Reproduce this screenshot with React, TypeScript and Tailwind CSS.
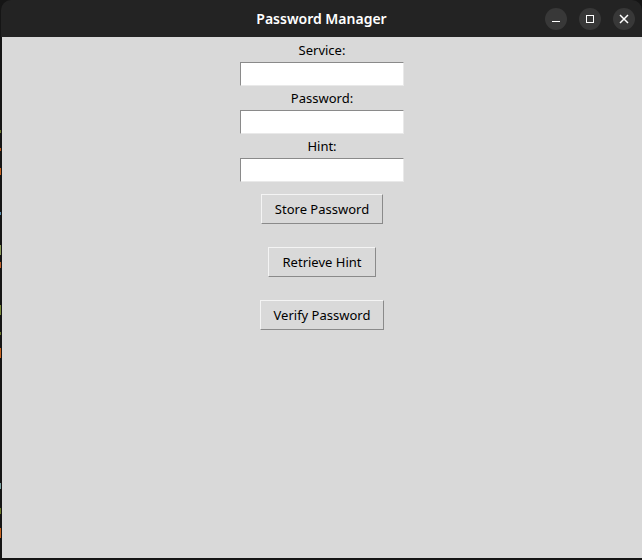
import React from "react";

const spots: { top: number; h: number; c: string }[] = [
  { top: 130, h: 3, c: "#6b7a2a" },
  { top: 148, h: 3, c: "#b85a1e" },
  { top: 168, h: 7, c: "#c8621f" },
  { top: 212, h: 3, c: "#5a8fb0" },
  { top: 245, h: 10, c: "#8a9a5a" },
  { top: 262, h: 6, c: "#c0602a" },
  { top: 305, h: 10, c: "#7a8a3a" },
  { top: 332, h: 3, c: "#6b7a2a" },
  { top: 348, h: 10, c: "#c8621f" },
  { top: 483, h: 6, c: "#7aa0a0" },
  { top: 508, h: 6, c: "#6b7a2a" },
  { top: 528, h: 10, c: "#c8621f" },
];

function Entry() {
  return (
    <div className="w-[164px] h-6 bg-white border-t border-l border-t-[#8a8a8a] border-l-[#8a8a8a] border-b border-r border-b-[#e9e9e9] border-r-[#e9e9e9]" />
  );
}

function Label({ text }: { text: string }) {
  return (
    <div className="h-6 flex items-center justify-center text-[13px] text-black leading-none">
      {text}
    </div>
  );
}

function Btn({ text, w, mt }: { text: string; w: string; mt: string }) {
  return (
    <button
      className={`${w} ${mt} h-[30px] bg-[#d9d9d9] text-[13px] text-black border border-t-[#f4f4f4] border-l-[#f4f4f4] border-b-[#8a8a8a] border-r-[#8a8a8a] flex items-center justify-center leading-none`}
    >
      {text}
    </button>
  );
}

export default function App() {
  return (
    <div
      className="w-[642px] h-[560px] bg-[#151515] flex flex-col relative overflow-hidden"
      style={{ fontFamily: '"Noto Sans", "Open Sans", sans-serif' }}
    >
      {spots.map((s, i) => (
        <div
          key={i}
          className="absolute left-0 w-px"
          style={{ top: s.top, height: s.h, background: s.c }}
        />
      ))}
      <div className="h-[37px] ml-px bg-[#232323] rounded-t-[10px] flex items-center justify-center relative shrink-0">
        <span className="text-white font-semibold text-[14px]">Password Manager</span>
        <div className="absolute right-[7px] top-[8px] flex gap-[12px]">
          <div className="w-[22px] h-[22px] rounded-full bg-[#383838] flex items-center justify-center">
            <div className="w-[8px] h-[1.5px] bg-white mt-[5px]" />
          </div>
          <div className="w-[22px] h-[22px] rounded-full bg-[#383838] flex items-center justify-center">
            <div className="w-[8px] h-[8px] border border-white" />
          </div>
          <div className="w-[22px] h-[22px] rounded-full bg-[#383838] flex items-center justify-center">
            <svg width="10" height="10" viewBox="0 0 10 10">
              <path d="M1 1 L9 9 M9 1 L1 9" stroke="white" strokeWidth="1.5" />
            </svg>
          </div>
        </div>
      </div>
      <div className="flex-1 ml-[2px] mb-[2px] bg-[#d9d9d9] flex flex-col items-center pt-px">
        <Label text="Service:" />
        <Entry />
        <Label text="Password:" />
        <Entry />
        <Label text="Hint:" />
        <Entry />
        <Btn text="Store Password" w="w-[122px]" mt="mt-[12px]" />
        <Btn text="Retrieve Hint" w="w-[108px]" mt="mt-[23px]" />
        <Btn text="Verify Password" w="w-[124px]" mt="mt-[23px]" />
      </div>
    </div>
  );
}
